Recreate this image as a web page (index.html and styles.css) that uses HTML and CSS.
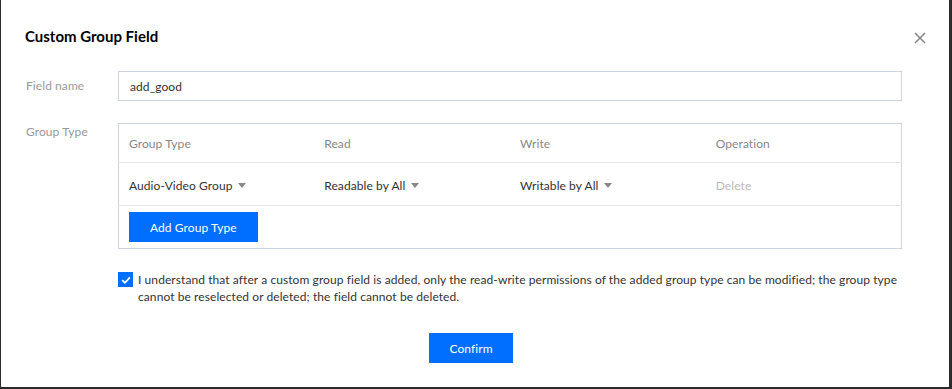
FILE: index.html
```html
<!DOCTYPE html>
<html lang="en">
<head>
    <meta charset="UTF-8">
    <meta name="viewport" content="width=device-width, initial-scale=1.0">
    <title>Custom Group Field</title>
    <link rel="stylesheet" href="styles.css">
</head>
<body>
    <div class="dialog">
        <div class="dialog-header">
            <h2>Custom Group Field</h2>
            <button class="close-btn" aria-label="Close">
                <svg width="12" height="12" viewBox="0 0 12 12">
                    <path d="M1 1L11 11M11 1L1 11" stroke="#888" stroke-width="1.6" fill="none"/>
                </svg>
            </button>
        </div>

        <div class="dialog-body">
            <div class="form-item">
                <label class="form-label">Field name</label>
                <div class="form-control">
                    <input type="text" class="text-input" value="add_good">
                </div>
            </div>

            <div class="form-item">
                <label class="form-label label-top">Group Type</label>
                <div class="form-control">
                    <table class="group-table">
                        <thead>
                            <tr>
                                <th>Group Type</th>
                                <th>Read</th>
                                <th>Write</th>
                                <th>Operation</th>
                            </tr>
                        </thead>
                        <tbody>
                            <tr>
                                <td><span class="dropdown">Audio-Video Group <i class="caret"></i></span></td>
                                <td><span class="dropdown">Readable by All <i class="caret"></i></span></td>
                                <td><span class="dropdown">Writable by All <i class="caret"></i></span></td>
                                <td><span class="link-disabled">Delete</span></td>
                            </tr>
                            <tr class="add-row">
                                <td colspan="4"><button class="btn btn-primary">Add Group Type</button></td>
                            </tr>
                        </tbody>
                    </table>
                </div>
            </div>

            <label class="agree">
                <span class="checkbox">
                    <svg width="14" height="14" viewBox="0 0 14 14">
                        <path d="M3.2 7.2L5.9 9.8L10.9 4.4" stroke="#fff" stroke-width="1.8" fill="none"/>
                    </svg>
                </span>
                <span class="agree-text">I understand that after a custom group field is added, only the read-write permissions of the added group type can be modified; the group type cannot be reselected or deleted; the field cannot be deleted.</span>
            </label>
        </div>

        <div class="dialog-footer">
            <button class="btn btn-primary btn-confirm">Confirm</button>
        </div>
    </div>
</body>
</html>
```

FILE: styles.css
```css
* {
    margin: 0;
    padding: 0;
    box-sizing: border-box;
}

body {
    font-family: Lato, "Liberation Sans", Arial, sans-serif;
    font-size: 12px;
    letter-spacing: 0.08px;
    color: #333;
    background-color: #2b2b2b;
    height: 100vh;
}

.dialog {
    width: 948px;
    height: 387px;
    margin-left: 1px;
    background: white;
    padding: 0 31px 0 23px;
    display: flex;
    flex-direction: column;
}

.dialog-header {
    display: flex;
    justify-content: space-between;
    align-items: flex-start;
    padding-top: 28px;
    height: 71px;
}

.dialog-header h2 {
    font-size: 15px;
    font-weight: 700;
    line-height: 16px;
    letter-spacing: 0;
    color: #000;
    padding-left: 1px;
}

.close-btn {
    background: none;
    border: none;
    cursor: pointer;
    width: 12px;
    height: 12px;
    margin-top: 4px;
    margin-right: -8px;
}

.close-btn svg {
    display: block;
}

.form-item {
    display: flex;
    margin-bottom: 22px;
}

.form-label {
    width: 94px;
    flex-shrink: 0;
    color: #999;
    line-height: 30px;
    padding-left: 2px;
}

.form-label.label-top {
    line-height: 18px;
}

.form-control {
    width: 784px;
}

.text-input {
    width: 100%;
    height: 30px;
    border: 1px solid #cfd5de;
    padding: 0 11px;
    font-family: inherit;
    font-size: 12px;
    letter-spacing: inherit;
    color: #333;
    outline: none;
}

.group-table {
    width: 100%;
    border-collapse: collapse;
    border: 1px solid #cfd5de;
    table-layout: fixed;
}

.group-table th {
    text-align: left;
    font-weight: 400;
    color: #888;
    height: 39px;
    padding: 0 10px;
    border-bottom: 1px solid #e2e5ea;
}

.group-table td {
    height: 43px;
    padding: 2px 10px 0;
    border-bottom: 1px solid #e2e5ea;
}

.group-table .add-row td {
    height: 42px;
    padding: 6px 10px;
    border-bottom: none;
}

.dropdown {
    display: inline-flex;
    align-items: center;
    cursor: pointer;
}

.caret {
    display: inline-block;
    width: 0;
    height: 0;
    margin-left: 6px;
    border-left: 4px solid transparent;
    border-right: 4px solid transparent;
    border-top: 5px solid #888;
}

.link-disabled {
    color: #bbb;
}

.btn {
    height: 30px;
    border: none;
    font-family: inherit;
    font-size: 12px;
    letter-spacing: inherit;
    cursor: pointer;
}

.btn-primary {
    background: #006eff;
    color: white;
    padding: 0 21px;
    display: block;
}

.agree {
    display: flex;
    align-items: flex-start;
    margin-left: 94px;
    margin-top: 2px;
    width: 784px;
    line-height: 17px;
    cursor: pointer;
}

.checkbox {
    width: 15px;
    height: 15px;
    flex-shrink: 0;
    background: #006eff;
    margin-top: 1px;
    margin-right: 5px;
    display: flex;
    align-items: center;
    justify-content: center;
}

.checkbox svg {
    display: block;
}

.dialog-footer {
    margin-top: auto;
    padding-bottom: 24px;
    display: flex;
    justify-content: center;
}

.btn-confirm {
    width: 84px;
    padding: 0;
}
```
